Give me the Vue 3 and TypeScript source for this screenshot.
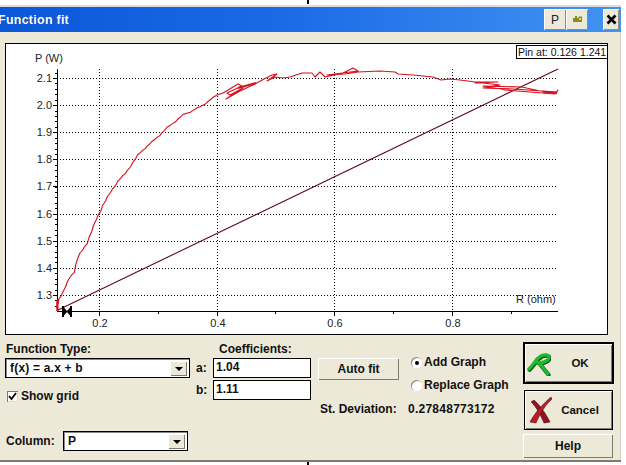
<script setup lang="ts">
import { ref } from 'vue'

const showGrid = ref(true)
const addGraph = ref(true)
const coefA = ref('1.04')
const coefB = ref('1.11')

// plot coordinates are page pixels minus the panel origin (5,43)
const px = (x: number) => x - 5
const py = (y: number) => y - 43

const yLabels = ['2.1', '2.0', '1.9', '1.8', '1.7', '1.6', '1.5', '1.4', '1.3']
const yAt = (i: number) => 78 + i * 27.12
const xLabels = [
  { text: '0.2', x: 99 },
  { text: '0.4', x: 217 },
  { text: '0.6', x: 334 },
  { text: '0.8', x: 452 },
]

const minorY: number[] = []
for (let y = 72.6; y < 311; y += 5.424) minorY.push(y)
const minorX = [158, 275, 393, 511]

// rising part of the measured curve, roughened a little between the anchors
const rising: [number, number][] = [
  [58, 300], [63, 292], [70, 277], [74, 272], [78, 257], [87, 243], [96, 220], [103, 205], [110, 193],
  [118, 181], [125, 174], [138, 155], [145, 148], [152, 142], [167, 128], [183, 115], [200, 107], [213, 98],
]
const roughPts: [number, number][] = []
rising.forEach(([x, y], i) => {
  if (i === 0) return
  const [x0, y0] = rising[i - 1]
  const steps = Math.max(2, Math.round((x - x0) / 2.5))
  for (let s = 1; s <= steps; s++) {
    const k = s / steps
    const n = roughPts.length
    const jitter = n % 2 === 0 ? 0.6 : -0.5
    roughPts.push([x0 + (x - x0) * k + jitter * 0.5, y0 + (y - y0) * k + (n % 3 === 0 ? jitter : -jitter * 0.4)])
  }
})

const curvePts: [number, number][] = [
  [57, 311], [57, 301], [59, 299], [58, 304], [58, 300],
  ...roughPts,
  [217, 95], [223, 93], [238, 84], [242, 86], [227, 93], [230, 95], [243, 88], [226, 99], [240, 91], [255, 84],
  [264, 79], [272, 75], [277, 74], [267, 81], [275, 77], [283, 78], [290, 77], [296, 75], [302, 73], [312, 73],
  [315, 77], [320, 72], [325, 77], [343, 73], [353, 68], [358, 71], [327, 75], [345, 74], [358, 72], [380, 71],
  [395, 72], [398, 74], [413, 75], [433, 77], [441, 80], [450, 79], [460, 80], [475, 82], [498, 82], [475, 83],
  [483, 83], [500, 85], [483, 88], [513, 89], [557, 92], [558, 90], [555, 94], [505, 90], [483, 86], [522, 87],
  [540, 91], [557, 93],
]
const curve = curvePts.map(([x, y]) => `${px(x)},${py(y)}`).join(' ')
</script>

<template>
  <div class="page">
    <i class="edge-mark edge-mark--top"></i>
    <div class="window">
      <div class="titlebar">
        <span class="title">Function fit</span>
        <div class="title-tools">
          <button class="tool" type="button">P</button>
          <button class="tool" type="button">
            <svg width="9" height="7" viewBox="0 0 9 7">
              <path d="M0 2h2V0h2v2h1l1-1.500h3V6H0z" fill="#8a8a1c" />
              <rect x="6" y="2" width="2" height="2" fill="#d8d890" />
            </svg>
          </button>
          <button class="tool tool--close" type="button">
            <svg width="11" height="11" viewBox="0 0 11 11">
              <path d="M1.500 1.500l8 8M9.500 1.500l-8 8" stroke="#000" stroke-width="2.600" />
            </svg>
          </button>
        </div>
      </div>

      <div class="plot">
        <svg width="603" height="292" viewBox="0 0 603 292" class="plot__svg">
          <g v-if="showGrid" class="grid">
            <line v-for="(_, i) in yLabels" :key="i" :x1="px(57)" :x2="px(558)" :y1="Math.round(py(yAt(i))) + 0.5" :y2="Math.round(py(yAt(i))) + 0.5" />
            <line v-for="l in xLabels" :key="l.x" :x1="px(l.x) + 0.5" :x2="px(l.x) + 0.5" :y1="py(69)" :y2="py(311)" />
          </g>

          <g class="axis">
            <line :x1="px(57) + 0.5" :x2="px(57) + 0.5" :y1="py(69)" :y2="py(312)" />
            <line :x1="px(57)" :x2="px(558)" :y1="py(311) + 0.5" :y2="py(311) + 0.5" />
            <line v-for="y in minorY" :key="y" :x1="px(55)" :x2="px(57)" :y1="Math.round(py(y)) + 0.5" :y2="Math.round(py(y)) + 0.5" />
            <line v-for="(_, i) in yLabels" :key="'m' + i" :x1="px(53)" :x2="px(57)" :y1="Math.round(py(yAt(i))) + 0.5" :y2="Math.round(py(yAt(i))) + 0.5" />
            <line v-for="l in xLabels" :key="'t' + l.x" :x1="px(l.x) + 0.5" :x2="px(l.x) + 0.5" :y1="py(311)" :y2="py(316)" />
            <line v-for="x in minorX" :key="x" :x1="px(x) + 0.5" :x2="px(x) + 0.5" :y1="py(311)" :y2="py(314)" />
          </g>

          <text class="plot__text" :x="px(35)" :y="py(62)">P (W)</text>
          <text v-for="(t, i) in yLabels" :key="t" class="plot__text" :x="px(52)" :y="py(yAt(i)) + 4" text-anchor="end">{{ t }}</text>
          <text v-for="l in xLabels" :key="l.text" class="plot__text" :x="px(l.x) + 1" :y="py(327)" text-anchor="middle">{{ l.text }}</text>
          <text class="plot__text" :x="px(516)" :y="py(303)">R (ohm)</text>

          <polyline class="fit-line" :points="`${px(58)},${py(310)} ${px(558)},${py(69)}`" />
          <polyline class="curve" :points="curve" />
          <path class="curve curve--thick" :d="`M${px(238)} ${py(88)}L${px(256)} ${py(83)}M${px(57.500)} ${py(311)}V${py(302)}M${px(543)} ${py(92)}L${px(557)} ${py(93)}`" />

          <!-- pin marker on the x axis -->
          <g fill="#000">
            <rect x="57" y="263" width="2" height="11" />
            <rect x="65" y="263" width="2" height="11" />
            <path d="M59 264.500l3.500 4-3.500 4zM65 264.500l-3.500 4 3.500 4z" />
          </g>
        </svg>
        <div class="pin">Pin at: 0.126 1.241</div>
      </div>

      <div class="controls">
        <div class="col col--type">
          <div class="label">Function Type:</div>
          <div class="combo">
            <span class="combo__value">f(x) = a.x + b</span>
            <span class="combo__arrow"></span>
          </div>
          <label class="check" @click.prevent="showGrid = !showGrid">
            <span class="check__box">
              <svg v-if="showGrid" width="9" height="9" viewBox="0 0 9 9">
                <path d="M1 4l2.500 3L8 1" fill="none" stroke="#000" stroke-width="1.800" />
              </svg>
            </span>
            Show grid
          </label>
          <div class="column-row">
            <span class="label">Column:</span>
            <div class="combo combo--column">
              <span class="combo__value">P</span>
              <span class="combo__arrow"></span>
            </div>
          </div>
        </div>

        <div class="col col--coef">
          <div class="label coef-head">Coefficients:</div>
          <div class="coef-row">
            <span class="label">a:</span>
            <input v-model="coefA" class="field" type="text" />
          </div>
          <div class="coef-row">
            <span class="label">b:</span>
            <input v-model="coefB" class="field" type="text" />
          </div>
        </div>

        <div class="col col--fit">
          <div class="fit-top">
            <button class="btn btn--auto" type="button">Auto fit</button>
            <div class="radios">
              <label class="radio" @click.prevent="addGraph = true">
                <span class="radio__dot" :class="{ on: addGraph }"></span>Add Graph
              </label>
              <label class="radio" @click.prevent="addGraph = false">
                <span class="radio__dot" :class="{ on: !addGraph }"></span>Replace Graph
              </label>
            </div>
          </div>
          <div class="deviation">
            <span class="deviation__label">St. Deviation:</span>
            <span class="deviation__value">0.27848773172</span>
          </div>
        </div>

        <div class="col col--actions">
          <button class="btn btn--ok" type="button">
            <svg class="btn__icon" width="24" height="26" viewBox="0 0 24 26">
              <path d="M2 19C6 15 10 8 14 6 18 4 23 5 22 8 21 11 14 14 10 12 8 10 10 8 13 7M12 13L21 24" fill="none" stroke="#0a4a12" stroke-width="4" stroke-linecap="round" transform="translate(.6 .8)" />
              <path d="M2 19C6 15 10 8 14 6 18 4 23 5 22 8 21 11 14 14 10 12 8 10 10 8 13 7M12 13L21 24" fill="none" stroke="#1cbb30" stroke-width="3.200" stroke-linecap="round" />
            </svg>
            <span class="btn__text">OK</span>
          </button>
          <button class="btn btn--cancel" type="button">
            <svg class="btn__icon" width="24" height="28" viewBox="0 0 24 28">
              <path d="M3 6C8 10 13 20 16 27L22 26C18 18 12 9 6 4z" fill="#8f1420" stroke="#4e0c12" stroke-width=".6" />
              <path d="M23 1C16 7 8 15 2 26L8 27C12 18 17 9 24 3z" fill="#b81c2a" stroke="#5a1014" stroke-width=".6" />
            </svg>
            <span class="btn__text">Cancel</span>
          </button>
          <button class="btn btn--help" type="button">Help</button>
        </div>
      </div>
    </div>
    <i class="edge-mark edge-mark--bottom"></i>
  </div>
</template>

<style>
html, body { margin: 0; background: #fff; }
</style>

<style scoped>
*, *::before, *::after { box-sizing: border-box; }

.page {
  position: relative;
  width: 626px;
  height: 465px;
  overflow: hidden;
  background: #fff;
  padding-top: 5px;
  font-family: "Liberation Sans", Arial, sans-serif;
  font-size: 12px;
  font-weight: bold;
  color: #111;
}

.edge-mark { position: absolute; left: 307px; width: 2px; background: #000; }
.edge-mark--top { top: 0; height: 4px; }
.edge-mark--bottom { bottom: 0; height: 3px; }

/* VENTANA */
.window {
  width: 621px;
  height: 457px;
  background: #ece9d8;
  border-top: 2px solid #dcdcdc;
  border-bottom: 2px solid #7d7b70;
  box-shadow: inset -1px 0 0 #cfcdbd;
}

.titlebar {
  height: 25px;
  display: flex;
  align-items: center;
  justify-content: space-between;
  background: linear-gradient(90deg, #0a57d8 0%, #1a6ae6 45%, #4293f2 100%);
}

.title {
  margin-left: -2px;
  color: #fff;
  font-size: 12.500px;
  letter-spacing: 0.25px;
  text-shadow: 1px 0 0 #0b3fa8;
}

.title-tools { display: flex; align-items: center; padding-right: 2px; }

.tool {
  width: 22px;
  height: 21px;
  padding: 0;
  display: flex;
  align-items: center;
  justify-content: center;
  font-family: "Liberation Sans", Arial, sans-serif;
  font-size: 12px;
  color: #222;
  background: #ece9d8;
  border: none;
  box-shadow: inset 1px 1px 0 #fff, inset -1px -1px 0 #8f8d80;
}
.tool--close { width: 16px; margin-left: 15px; }

/* GRAFICA */
.plot {
  position: relative;
  width: 603px;
  height: 292px;
  margin: 11px 0 0 5px;
  background: #fff;
  outline: 1px solid #000;
  outline-offset: -1px;
}
.plot__svg { display: block; }

.grid line {
  stroke: #000;
  stroke-width: 1;
  stroke-dasharray: 1 2;
  shape-rendering: crispEdges;
}
.axis line { stroke: #000; stroke-width: 1; shape-rendering: crispEdges; }
.plot__text {
  font-family: "Liberation Sans", Arial, sans-serif;
  font-size: 11px;
  font-weight: normal;
  fill: #222;
}
.fit-line { fill: none; stroke: #5c0a1a; stroke-width: 1.100; }
.curve { fill: none; stroke: #d6101e; stroke-width: 1.100; stroke-linejoin: round; }
.curve--thick { stroke-width: 2; }

.pin {
  position: absolute;
  top: 2px;
  right: 0;
  width: 92px;
  height: 14px;
  padding-left: 1px;
  border: 1px solid #000;
  background: #fff;
  font-size: 10.500px;
  font-weight: normal;
  line-height: 12px;
  white-space: nowrap;
}

/* CONTROLES */
.controls { display: flex; align-items: flex-start; padding: 7px 0 0 5px; }
.col { display: flex; flex-direction: column; }
.col--type { width: 185px; }
.col--coef { width: 115px; margin-left: 6px; }
.col--fit { width: 198px; margin-left: 7px; padding-top: 13px; }
.col--actions { width: 91px; margin-left: 7px; }

.label { line-height: 14px; white-space: nowrap; padding-left: 1px; }

.combo {
  position: relative;
  height: 20px;
  margin-top: 2px;
  background: #fff;
  border: 1px solid #000;
  box-shadow: inset 1px 1px 0 #8a8a8a;
  line-height: 18px;
  padding-left: 4px;
  letter-spacing: 0.2px;
}
.combo__arrow {
  position: absolute;
  top: 2px;
  right: 2px;
  width: 17px;
  height: 15px;
  background: #ece9d8;
  box-shadow: inset 1px 1px 0 #fff, inset -1px -1px 0 #7d7b70;
}
.combo__arrow::after {
  content: "";
  position: absolute;
  left: 5px;
  top: 6px;
  border: 4px solid transparent;
  border-top-color: #000;
  border-bottom: none;
}

.check { display: flex; align-items: center; gap: 3px; height: 14px; margin-top: 11px; padding-left: 2px; }
.check__box {
  display: flex;
  align-items: center;
  justify-content: center;
  width: 11px;
  height: 11px;
  background: #fff;
  box-shadow: inset 1px 1px 0 #7d7b70, inset -1px -1px 0 #dedbc9;
}

.column-row { display: flex; align-items: center; margin-top: 28px; }
.column-row .label { width: 58px; }
.combo--column { width: 125px; margin-top: 0; }

.coef-head { padding-left: 23px; }
.coef-row { display: flex; align-items: center; margin-top: 2px; }
.coef-row .label { width: 17px; padding-left: 0; }
.field {
  width: 98px;
  height: 20px;
  padding: 0 0 3px 2px;
  border: 1px solid #000;
  border-radius: 0;
  outline: none;
  background: #fff;
  color: #111;
  font-family: "Liberation Sans", Arial, sans-serif;
  font-size: 12px;
  font-weight: bold;
}

.fit-top { display: flex; align-items: flex-start; gap: 12px; }
.radios { display: flex; flex-direction: column; gap: 9px; }
.radio { display: flex; align-items: center; gap: 2px; height: 14px; white-space: nowrap; }
.radio__dot {
  position: relative;
  width: 11px;
  height: 11px;
  border-radius: 50%;
  background: #fff;
  box-shadow: inset 1px 1px 0 #8d8b7e;
}
.radio__dot.on::after {
  content: "";
  position: absolute;
  left: 4px;
  top: 4px;
  width: 4px;
  height: 4px;
  border-radius: 50%;
  background: #000;
}

.deviation { display: flex; margin-top: 10px; padding-left: 2px; line-height: 14px; white-space: nowrap; }
.deviation__label { width: 88px; }
.deviation__value { letter-spacing: 0.25px; }

/* BOTONES */
.btn {
  display: flex;
  align-items: center;
  justify-content: center;
  padding: 0;
  background: #ece9d8;
  border: none;
  color: #111;
  font-family: "Liberation Sans", Arial, sans-serif;
  font-size: 12px;
  font-weight: bold;
  box-shadow: inset 1px 1px 0 #fff, inset -1px -1px 0 #7d7b70;
}
.btn__icon { flex: none; }
.btn__text { flex: 1; text-align: center; font-size: 11.500px; }
.btn--auto { width: 81px; height: 22px; margin-top: 3px; flex: none; }
.btn--ok {
  width: 91px;
  height: 42px;
  padding: 0 13px 0 2px;
  border: 2px solid #000;
}
.btn--ok .btn__text { padding-left: 10px; }
.btn--cancel {
  width: 89px;
  height: 40px;
  margin: 6px 0 0 1px;
  padding: 0 4px 0 3px;
  border: 1px solid #000;
}
.btn--help { width: 90px; height: 24px; margin-top: 4px; }
</style>
